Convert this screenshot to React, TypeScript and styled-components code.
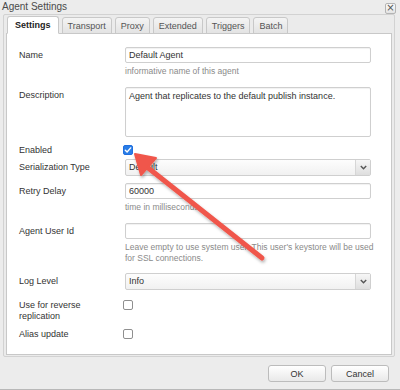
import { FunctionComponent, ReactNode } from "react";
import styled, { createGlobalStyle } from "styled-components";

const GlobalStyle = createGlobalStyle`
  html, body {
    margin: 0;
    padding: 0;
    background: #ececec;
  }
  body {
    font-family: "Liberation Sans", Arial, sans-serif;
    font-size: 9px;
    color: #333;
  }
`;

const tabs = ["Settings", "Transport", "Proxy", "Extended", "Triggers", "Batch"];

interface RowProps {
  label: ReactNode;
  gap: number;
  compact?: boolean;
  children?: ReactNode;
}

const Row: FunctionComponent<RowProps> = ({ label, gap, compact, children }) => (
  <FormRow $gap={gap}>
    <Label $compact={compact}>{label}</Label>
    <Control>{children}</Control>
  </FormRow>
);

const Check: FunctionComponent<{ checked?: boolean }> = ({ checked }) => (
  <CheckBox $checked={checked}>
    {checked ? (
      <svg width="8" height="8" viewBox="0 0 8 8">
        <path
          d="M1.3 4.2 L3.1 6 L6.7 1.9"
          fill="none"
          stroke="#fff"
          strokeWidth="1.4"
          strokeLinecap="round"
          strokeLinejoin="round"
        />
      </svg>
    ) : null}
  </CheckBox>
);

const Select: FunctionComponent<{ value: string }> = ({ value }) => (
  <SelectBox>
    <SelectValue>{value}</SelectValue>
    <SelectArrow>
      <svg width="7" height="5" viewBox="0 0 7 5">
        <path d="M0.8 1 L3.5 3.8 L6.2 1" fill="none" stroke="#555" strokeWidth="1.4" />
      </svg>
    </SelectArrow>
  </SelectBox>
);

export default function App() {
  return (
    <>
      <GlobalStyle />
      <Dialog>
        <TitleBar>
          <Title>Agent Settings</Title>
          <CloseButton type="button">×</CloseButton>
        </TitleBar>
        <TabFrame>
          <TabStrip>
            {tabs.map((t) => (
              <Tab key={t} $active={t === "Settings"}>
                {t}
              </Tab>
            ))}
          </TabStrip>
          <Panel>
            <Row label="Name" gap={10}>
              <Input>Default Agent</Input>
              <Help>informative name of this agent</Help>
            </Row>
            <Row label="Description" gap={8}>
              <TextArea>Agent that replicates to the default publish instance.</TextArea>
            </Row>
            <Row label="Enabled" gap={3} compact>
              <CheckWrap>
                <Check checked />
              </CheckWrap>
            </Row>
            <Row label="Serialization Type" gap={7}>
              <Select value="Default" />
            </Row>
            <Row label="Retry Delay" gap={10}>
              <Input>60000</Input>
              <Help>time in milliseconds</Help>
            </Row>
            <Row label="Agent User Id" gap={9}>
              <Input />
              <Help>
                Leave empty to use system user. This user's keystore will be used
                <br />
                for SSL connections.
              </Help>
            </Row>
            <Row label="Log Level" gap={10}>
              <Select value="Info" />
            </Row>
            <Row
              label={
                <>
                  Use for reverse
                  <br />
                  replication
                </>
              }
              gap={7}
              compact
            >
              <CheckWrap>
                <Check />
              </CheckWrap>
            </Row>
            <Row label="Alias update" gap={0} compact>
              <CheckWrap>
                <Check />
              </CheckWrap>
            </Row>
          </Panel>
        </TabFrame>
        <Footer>
          <Button type="button">OK</Button>
          <Button type="button">Cancel</Button>
        </Footer>
        <Arrow width="400" height="390" viewBox="0 0 400 390">
          <defs>
            <filter id="shadow" x="-20%" y="-20%" width="140%" height="140%">
              <feDropShadow dx="1" dy="2" stdDeviation="1.5" floodColor="#000" floodOpacity="0.3" />
            </filter>
          </defs>
          <g filter="url(#shadow)" fill="#f0574b" stroke="#f0574b">
            <line x1="262" y1="258" x2="147" y2="167" strokeWidth="5" strokeLinecap="round" />
            <polygon points="135,154 156,158 141,175" strokeWidth="2" strokeLinejoin="round" />
          </g>
        </Arrow>
      </Dialog>
    </>
  );
}

const Dialog = styled.div`
  position: relative;
  width: 400px;
  height: 390px;
  box-sizing: border-box;
  background: #ececec;
  border-bottom: 1px solid #b8b8b8;
  overflow: hidden;
`;

const TitleBar = styled.div`
  height: 14px;
  display: flex;
  align-items: center;
  justify-content: space-between;
  padding: 0 4px 0 2px;
`;

const Title = styled.div`
  font-size: 10px;
  color: #4a4a4a;
  margin-top: -1px;
`;

const CloseButton = styled.button`
  width: 11px;
  height: 11px;
  margin-top: 2px;
  padding: 0;
  border: 1px solid #b4b4b4;
  border-radius: 2px;
  background: linear-gradient(#fafafa, #e4e4e4);
  font-family: "DejaVu Sans", sans-serif;
  font-size: 10px;
  line-height: 8px;
  color: #555;
`;

const TabFrame = styled.div`
  margin: 0 5px 0 3px;
  border: 1px solid #d2d2d2;
  border-radius: 2px;
  padding: 1px 2px 1px 2px;
  background: #ebebeb;
`;

const TabStrip = styled.div`
  display: flex;
  gap: 3px;
  height: 18px;
  align-items: flex-end;
  padding-left: 1px;
  margin-bottom: -1px;
`;

const Tab = styled.div<{ $active?: boolean }>`
  position: relative;
  box-sizing: border-box;
  height: ${(p) => (p.$active ? "18px" : "17px")};
  padding: 0 ${(p) => (p.$active ? "7px" : "5px")};
  display: flex;
  align-items: center;
  border: 1px solid #c8c8c8;
  border-bottom: ${(p) => (p.$active ? "1px solid #fff" : "1px solid #c8c8c8")};
  border-radius: 3px 3px 0 0;
  background: ${(p) => (p.$active ? "#fff" : "linear-gradient(#f4f4f4, #e3e3e3)")};
  color: ${(p) => (p.$active ? "#222" : "#555")};
  font-weight: ${(p) => (p.$active ? "bold" : "normal")};
  z-index: ${(p) => (p.$active ? 1 : 0)};
`;

const Panel = styled.div`
  background: #fff;
  border: 1px solid #c8c8c8;
  height: 322px;
  box-sizing: border-box;
  padding: 13px 0 0 12px;
`;

const FormRow = styled.div<{ $gap: number }>`
  display: grid;
  grid-template-columns: 106px 246px;
  margin-bottom: ${(p) => p.$gap}px;
`;

const Label = styled.div<{ $compact?: boolean }>`
  line-height: 11px;
  padding-top: ${(p) => (p.$compact ? "0" : "3px")};
  color: #333;
`;

const Control = styled.div`
  display: flex;
  flex-direction: column;
`;

const Input = styled.div`
  box-sizing: border-box;
  height: 16px;
  border: 1px solid #cfcfcf;
  border-radius: 2px;
  box-shadow: inset 0 1px 1px rgba(0, 0, 0, 0.06);
  background: #fff;
  padding: 0 3px;
  line-height: 14px;
  color: #333;
`;

const TextArea = styled(Input)`
  height: 50px;
  line-height: 14px;
  padding-top: 1px;
`;

const Help = styled.div`
  margin-top: 3px;
  font-size: 8.5px;
  line-height: 11px;
  color: #8a8a8a;
  white-space: nowrap;
`;

const SelectBox = styled.div`
  box-sizing: border-box;
  height: 17px;
  display: flex;
  border: 1px solid #cfcfcf;
  border-radius: 2px;
  background: linear-gradient(#fdfdfd, #f1f1f1);
`;

const SelectValue = styled.div`
  flex: 1;
  padding: 0 3px;
  line-height: 15px;
  color: #333;
`;

const SelectArrow = styled.div`
  width: 14px;
  display: flex;
  align-items: center;
  justify-content: center;
  border-left: 1px solid #d6d6d6;
  background: linear-gradient(#f6f6f6, #dedede);
`;

const CheckWrap = styled.div`
  margin-left: -2px;
  height: 11px;
`;

const CheckBox = styled.div<{ $checked?: boolean }>`
  box-sizing: border-box;
  width: 10px;
  height: 10px;
  border-radius: 2px;
  display: flex;
  align-items: center;
  justify-content: center;
  border: 1px solid ${(p) => (p.$checked ? "#1f6fe0" : "#8f8f8f")};
  background: ${(p) => (p.$checked ? "#2a7de6" : "#fff")};
`;

const Footer = styled.div`
  display: flex;
  justify-content: flex-end;
  gap: 5px;
  padding: 8px 11px 0 0;
`;

const Button = styled.button`
  width: 58px;
  height: 17px;
  padding: 0;
  border: 1px solid #bcbcbc;
  border-radius: 3px;
  background: linear-gradient(#ffffff, #e9e9e9);
  font-family: "Liberation Sans", Arial, sans-serif;
  font-size: 9px;
  color: #333;
`;

const Arrow = styled.svg`
  position: absolute;
  left: 0;
  top: 0;
  pointer-events: none;
`;
